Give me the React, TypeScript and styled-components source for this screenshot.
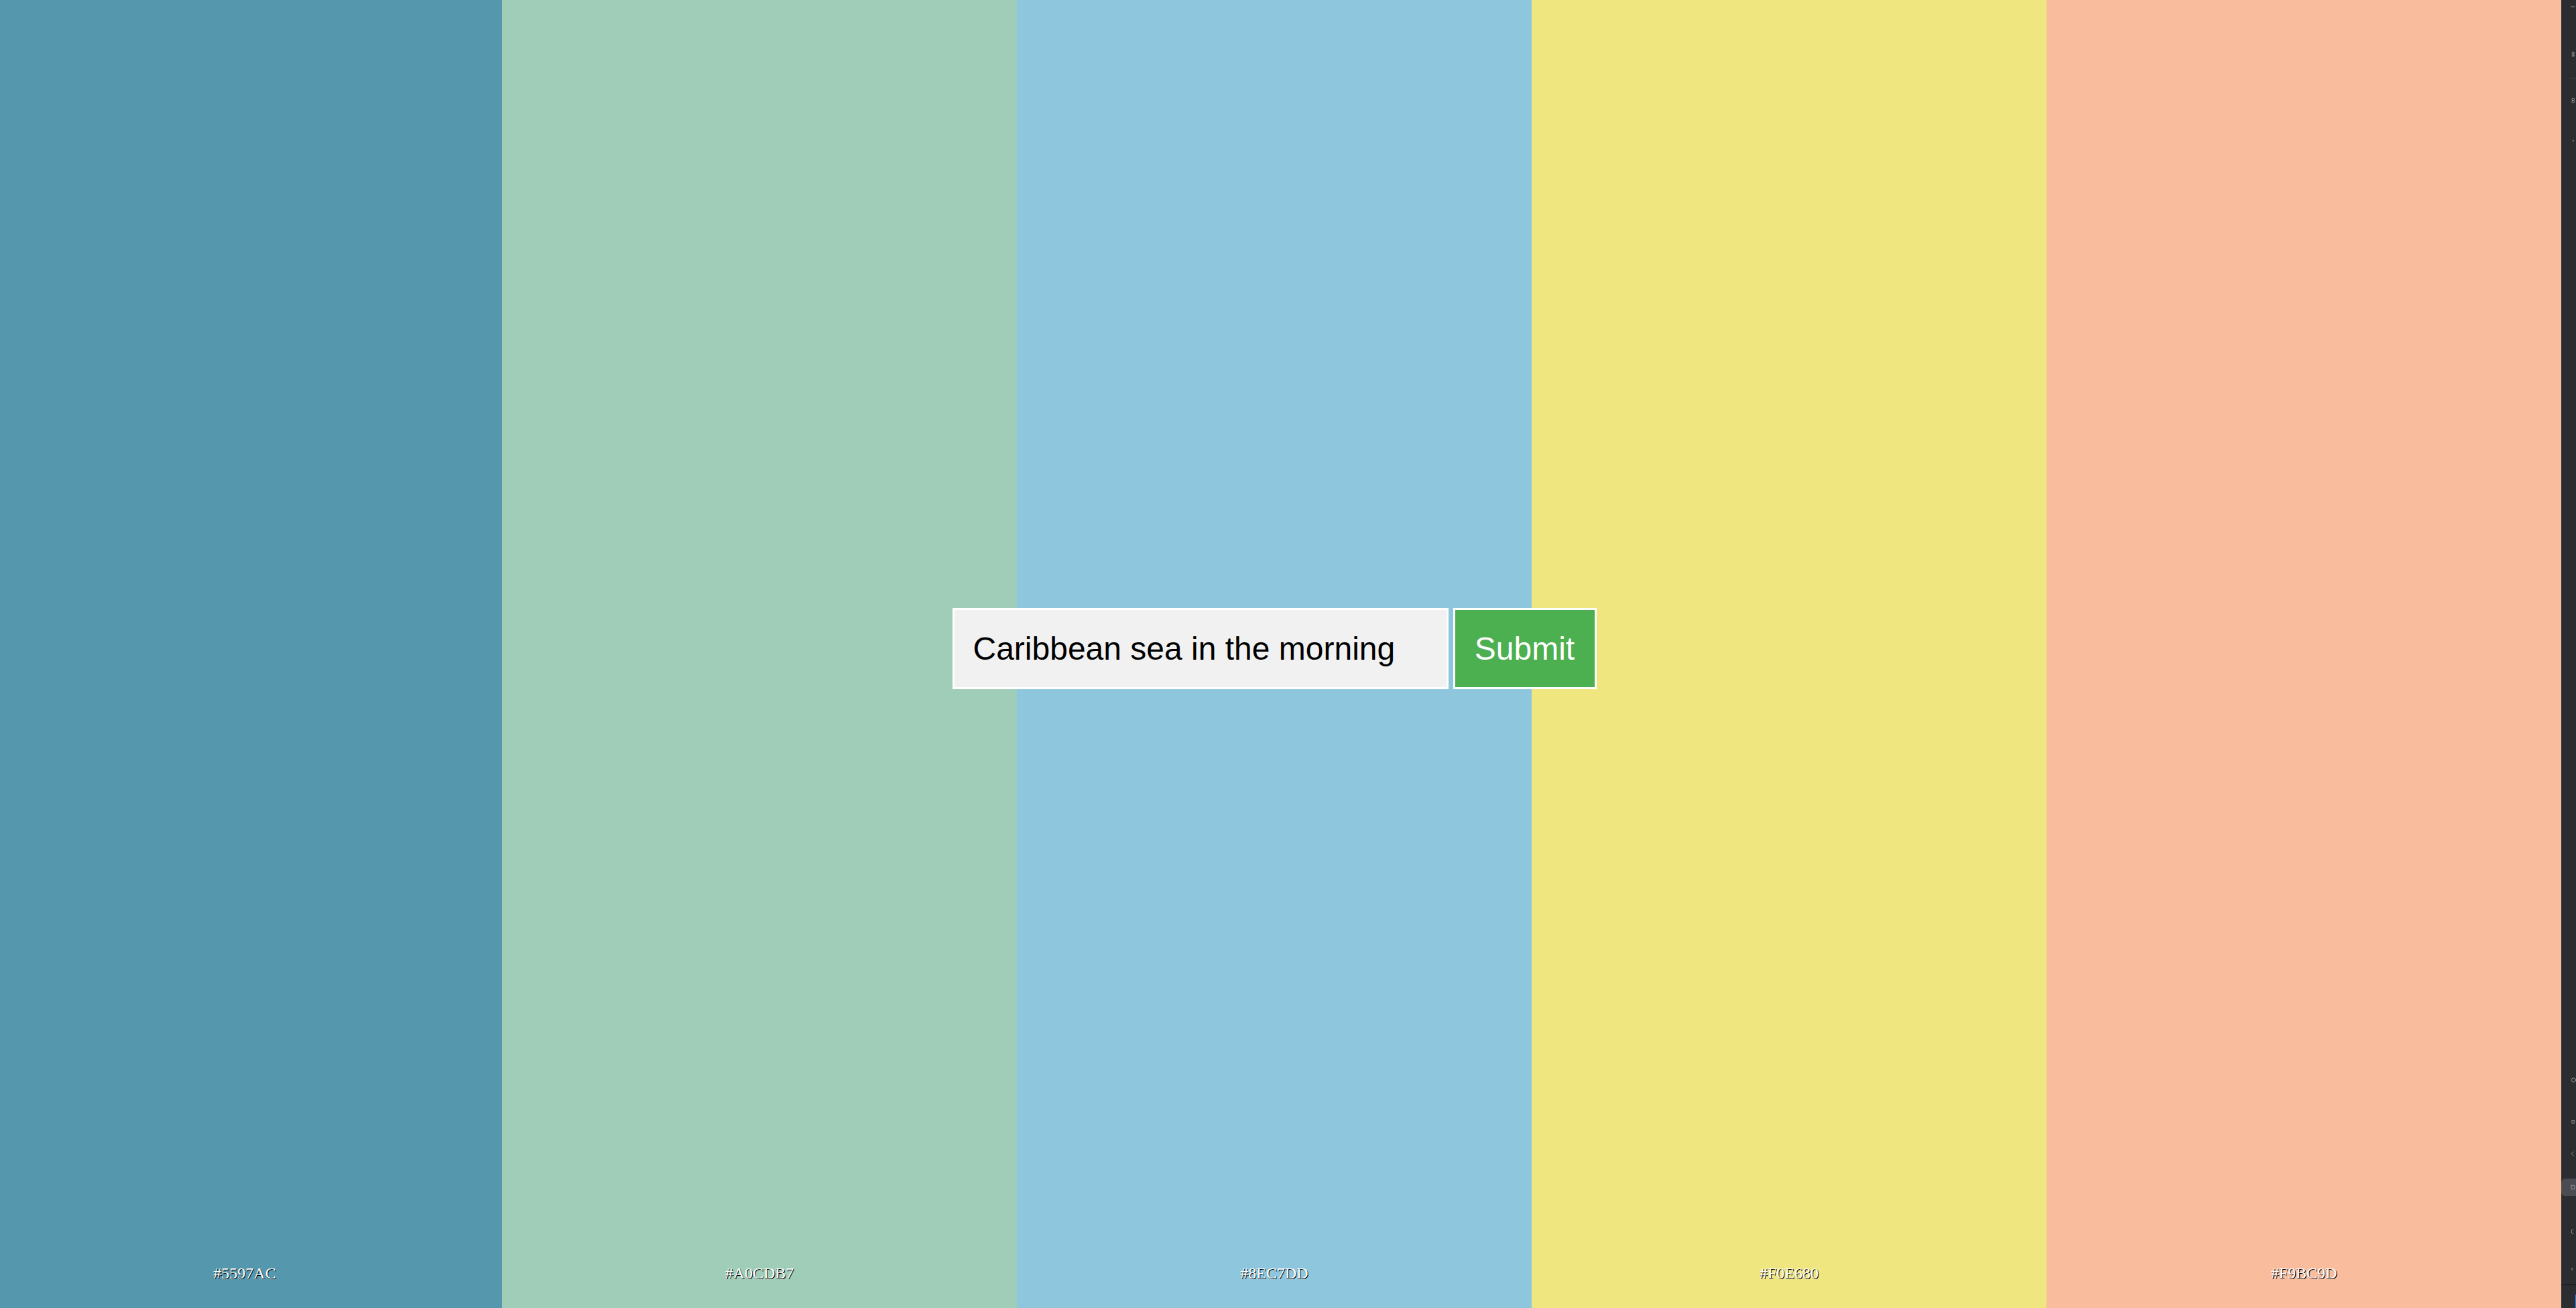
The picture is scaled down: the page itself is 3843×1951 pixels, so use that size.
import React from "react";
import styled, { createGlobalStyle } from "styled-components";

const GlobalStyle = createGlobalStyle`
  html, body {
    margin: 0;
    padding: 0;
    overflow: hidden;
    background: #2b2d31;
  }
  #root { width: 3843px; height: 1951px; }
`;

const Page = styled.div`
  position: relative;
  width: 3843px;
  height: 1951px;
  overflow: hidden;
`;

const Palette = styled.div`
  display: flex;
  width: 3840px;
  height: 100%;
  margin-left: -19px;
`;

const Swatch = styled.div<{ $color: string }>`
  flex: 0 0 768px;
  height: 100%;
  background: ${(p) => p.$color};
  display: flex;
  flex-direction: column;
  justify-content: flex-end;
  align-items: center;
  padding-bottom: 38px;
  box-sizing: border-box;
`;

const Label = styled.span`
  font-family: "Liberation Serif", "Times New Roman", serif;
  font-size: 24px;
  line-height: 27px;
  color: #ffffff;
  text-shadow: 1px 1px 0 #000000;
`;

const Overlay = styled.div`
  position: absolute;
  top: 0;
  left: -19px;
  width: 3840px;
  height: 1935px;
  display: flex;
  align-items: center;
  justify-content: center;
  pointer-events: none;
`;

const Form = styled.form`
  display: flex;
  align-items: stretch;
  gap: 7px;
  pointer-events: auto;
`;

const Input = styled.input`
  box-sizing: border-box;
  width: 740px;
  height: 121px;
  border: 3px solid #ffffff;
  background: #f1f1f1;
  padding: 0 28px;
  font-family: "Liberation Sans", Arial, sans-serif;
  font-size: 48px;
  color: #000000;
  outline: none;
`;

const Button = styled.button`
  box-sizing: border-box;
  width: 214px;
  height: 121px;
  border: 3px solid #ffffff;
  background: #4caf50;
  color: #ffffff;
  font-family: "Liberation Sans", Arial, sans-serif;
  font-size: 48px;
  padding: 0;
  cursor: pointer;
`;

const Rail = styled.div`
  position: absolute;
  top: 0;
  right: 0;
  width: 22px;
  height: 100%;
  background: #2b2d31;
  display: flex;
  flex-direction: column;
  justify-content: space-between;
  overflow: hidden;
`;

const RailGroup = styled.div`
  display: flex;
  flex-direction: column;
`;

const RailIcon = styled.div<{ $mt: number; $active?: boolean }>`
  margin-top: ${(p) => p.$mt}px;
  height: 26px;
  padding-left: 14px;
  display: flex;
  align-items: center;
  border-radius: 6px 0 0 6px;
  background: ${(p) => (p.$active ? "#4a4c52" : "transparent")};
`;

const RailSep = styled.div<{ $mt: number; $inset: number; $color: string }>`
  margin-top: ${(p) => p.$mt}px;
  margin-left: ${(p) => p.$inset}px;
  height: 1px;
  background: ${(p) => p.$color};
`;

const RailFooter = styled.div`
  height: 36px;
  border-top: 2px solid #1e1f22;
  padding: 14px 0 0 21px;
  box-sizing: border-box;
`;

const FooterMark = styled.div`
  width: 4px;
  height: 20px;
  background: #3b7cf5;
`;

const Ic = ({ children, w = 26, h = 26 }: { children: React.ReactNode; w?: number; h?: number }) => (
  <svg width={w} height={h} viewBox="0 0 26 26" fill="none" stroke="#c9cacd" strokeWidth="2" strokeLinecap="round">
    {children}
  </svg>
);

const colors = ["#5597AC", "#A0CDB7", "#8EC7DD", "#F0E680", "#F9BC9D"];

export default function App() {
  return (
    <Page>
      <GlobalStyle />
      <Palette>
        {colors.map((c) => (
          <Swatch key={c} $color={c}>
            <Label>{c}</Label>
          </Swatch>
        ))}
      </Palette>
      <Overlay>
        <Form onSubmit={(e) => e.preventDefault()}>
          <Input type="text" defaultValue="Caribbean sea in the morning" />
          <Button type="submit">Submit</Button>
        </Form>
      </Overlay>
      <Rail>
        <RailGroup>
          <RailIcon $mt={-3}>
            <Ic><path d="M2 13 H20" /></Ic>
          </RailIcon>
          <RailIcon $mt={45}>
            <Ic><circle cx="12" cy="7" r="5" /><circle cx="12" cy="19" r="5" /></Ic>
          </RailIcon>
          <RailSep $mt={22} $inset={12} $color="#45474c" />
          <RailIcon $mt={20}>
            <Ic><rect x="6" y="2" width="12" height="10" rx="4" /><rect x="6" y="14" width="12" height="10" rx="4" /></Ic>
          </RailIcon>
          <RailIcon $mt={34}>
            <Ic><circle cx="12" cy="13" r="1.5" fill="#c9cacd" /></Ic>
          </RailIcon>
        </RailGroup>
        <RailGroup>
          <RailIcon $mt={0}>
            <Ic><circle cx="14" cy="13" r="10" /></Ic>
          </RailIcon>
          <RailIcon $mt={36}>
            <Ic><path d="M4 7 C8 10 14 10 20 7 M4 13 C8 16 14 16 20 13 M4 19 C8 22 14 22 20 19" /></Ic>
          </RailIcon>
          <RailIcon $mt={22}>
            <Ic><path d="M14 3 L4 13 L14 23" /></Ic>
          </RailIcon>
          <RailIcon $mt={24} $active>
            <Ic><rect x="3" y="4" width="16" height="18" rx="2" /></Ic>
          </RailIcon>
          <RailIcon $mt={40}>
            <Ic><path d="M13 3 A10 10 0 0 0 13 23" /></Ic>
          </RailIcon>
          <RailIcon $mt={30}>
            <Ic><path d="M10 8 A5 5 0 0 0 10 18" /></Ic>
          </RailIcon>
          <RailSep $mt={8} $inset={0} $color="transparent" />
          <RailFooter>
            <FooterMark />
          </RailFooter>
        </RailGroup>
      </Rail>
    </Page>
  );
}
